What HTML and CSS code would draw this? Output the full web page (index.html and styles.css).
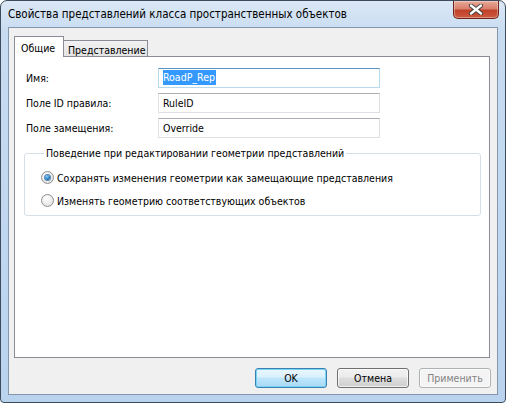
FILE: index.html
```html
<!DOCTYPE html>
<html>
<head>
<meta charset="utf-8">
<link rel="stylesheet" href="styles.css">
</head>
<body>
<div class="window">
  <div class="titlebar">
    <span class="title">Свойства представлений класса пространственных объектов</span>
    <div class="close">
      <svg width="16" height="11" viewBox="0 0 16 11">
        <path d="M3 1.5 L13 9.5 M13 1.5 L3 9.5" stroke="#3b3b3b" stroke-width="4.2" stroke-linecap="round"/>
        <path d="M3 1.5 L13 9.5 M13 1.5 L3 9.5" stroke="#ffffff" stroke-width="2.4" stroke-linecap="round"/>
      </svg>
    </div>
  </div>
  <div class="client">
    <div class="tabs">
      <div class="tab active">Общие</div>
      <div class="tab">Представление</div>
    </div>
    <div class="panel">
      <div class="row">
        <label class="lbl">Имя:</label>
        <div class="input focused"><span class="sel">RoadP_Rep</span></div>
      </div>
      <div class="row">
        <label class="lbl">Поле ID правила:</label>
        <div class="input">RuleID</div>
      </div>
      <div class="row">
        <label class="lbl">Поле замещения:</label>
        <div class="input">Override</div>
      </div>
      <fieldset class="group">
        <legend>Поведение при редактировании геометрии представлений</legend>
        <div class="radio-row"><span class="radio checked"></span><span>Сохранять изменения геометрии как замещающие представления</span></div>
        <div class="radio-row"><span class="radio"></span><span>Изменять геометрию соответствующих объектов</span></div>
      </fieldset>
    </div>
    <div class="buttons">
      <div class="btn default">OK</div>
      <div class="btn">Отмена</div>
      <div class="btn disabled">Применить</div>
    </div>
  </div>
</div>
</body>
</html>
```

FILE: styles.css
```css
html, body {
  margin: 0;
  padding: 0;
  background: #ffffff;
}
body {
  font-family: "DejaVu Sans Condensed", "DejaVu Sans", sans-serif;
  font-size: 10.5px;
  color: #000;
}
.window {
  width: 506px;
  height: 403px;
  box-sizing: border-box;
  border: 1px solid #3d4c5d;
  border-radius: 7px 7px 4px 4px;
  background: linear-gradient(to bottom, #dbe8f5 0px, #c8dcf1 30px, #b9d3ee 100%);
  display: flex;
  flex-direction: column;
  overflow: hidden;
}
.titlebar {
  height: 26px;
  display: flex;
  align-items: flex-start;
  justify-content: space-between;
}
.title {
  font-family: "DejaVu Sans Condensed", "DejaVu Sans", sans-serif;
  font-size: 11.5px;
  margin: 6px 0 0 7px;
  color: #000;
}
.close {
  width: 46px;
  height: 18px;
  margin-right: 6px;
  box-sizing: border-box;
  border: 1px solid #6c2418;
  border-top: none;
  border-radius: 0 0 5px 5px;
  background: linear-gradient(to bottom, #e9a99a 0%, #d8806c 45%, #c2412a 55%, #cc5a3e 100%);
  display: flex;
  align-items: center;
  justify-content: center;
  box-shadow: inset 0 0 0 1px rgba(255,255,255,0.35);
}
.client {
  flex: 1;
  margin: 0 7px 7px 7px;
  border: 1px solid #8396ab;
  background: #f0f0f0;
  padding: 8px 7px 6px 5px;
  display: flex;
  flex-direction: column;
}
.tabs {
  display: flex;
  align-items: flex-end;
  height: 20px;
  position: relative;
  z-index: 1;
}
.tab {
  height: 16px;
  box-sizing: border-box;
  border: 1px solid #898c95;
  border-bottom: none;
  background: linear-gradient(to bottom, #f2f2f2, #e3e3e3);
  padding: 2px 2px 0 4px;
  margin-left: -1px;
  line-height: 14px;
}
.tab.active {
  height: 21px;
  margin-bottom: -1px;
  margin-left: 0;
  background: #ffffff;
  padding: 4px 0 0 6px;
  width: 50px;
  position: relative;
  z-index: 2;
}
.panel {
  height: 302px;
  box-sizing: border-box;
  border: 1px solid #898c95;
  background: #ffffff;
  padding: 11px 0 0 11px;
  display: flex;
  flex-direction: column;
  gap: 5px;
}
.row {
  display: flex;
  align-items: center;
  height: 20px;
}
.lbl {
  width: 132px;
}
.input {
  width: 222px;
  height: 20px;
  box-sizing: border-box;
  border: 1px solid #dde1e6;
  border-top-color: #abadb3;
  padding: 2px 0 0 4px;
  line-height: 14px;
  background: #fff;
}
.input.focused {
  border-color: #b7d9ed;
  border-top-color: #5794bf;
  padding-top: 1px;
}
.sel {
  background: #3399ff;
  color: #fff;
  display: inline-block;
  line-height: 15px;
  padding: 0 1px 0 0;
}
.group {
  margin: 4px 0 0 -2px;
  width: 457px;
  height: 69px;
  box-sizing: border-box;
  border: 1px solid #d5dfe5;
  border-radius: 3px;
  padding: 12px 0 0 16px;
  display: flex;
  flex-direction: column;
  gap: 10px;
}
.group legend {
  padding: 0 2px;
  margin-left: 3px;
}
.radio-row {
  display: flex;
  align-items: center;
  gap: 3px;
  height: 13px;
}
.radio {
  width: 13px;
  height: 13px;
  box-sizing: border-box;
  border-radius: 50%;
  border: 1px solid #8e8f8f;
  background: radial-gradient(circle at 40% 35%, #ffffff 0%, #e9e9e9 60%, #d6d6d6 100%);
  display: flex;
  align-items: center;
  justify-content: center;
}
.radio.checked::after {
  content: "";
  width: 5px;
  height: 5px;
  border-radius: 50%;
  background: radial-gradient(circle at 40% 35%, #8fd1f5 0%, #2a7bc3 55%, #164b82 100%);
  box-shadow: 0 0 0 1px #5c89b3;
}
.buttons {
  display: flex;
  justify-content: flex-end;
  gap: 10px;
  margin-top: 10px;
  margin-right: -1px;
}
.btn {
  width: 72px;
  height: 20px;
  box-sizing: border-box;
  border: 1px solid #707070;
  border-radius: 3px;
  background: linear-gradient(to bottom, #f2f2f2 0%, #ebebeb 45%, #dddddd 50%, #cfcfcf 100%);
  text-align: center;
  line-height: 18px;
  box-shadow: inset 0 0 0 1px rgba(255,255,255,0.7);
}
.btn.default {
  border-color: #3c7fb1;
  background: linear-gradient(to bottom, #eaf6fd 0%, #d9f0fc 45%, #bee6fd 50%, #a7d9f5 100%);
  box-shadow: inset 0 0 0 1px #78d4f6;
}
.btn.disabled {
  border-color: #adb2b5;
  background: #f4f4f4;
  color: #838383;
}
```
